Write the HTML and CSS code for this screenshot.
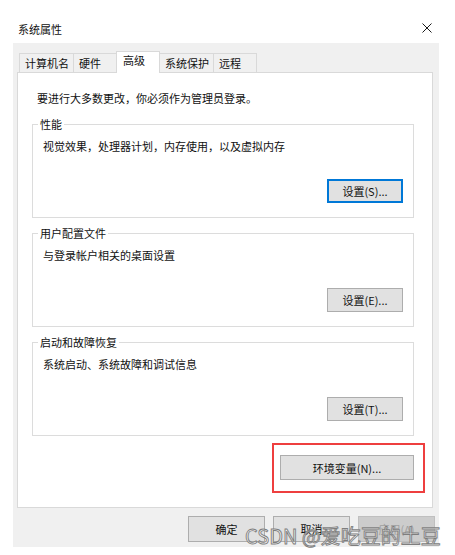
FILE: index.html
```html
<!DOCTYPE html>
<html>

<head>
    <link rel="stylesheet" href="styles.css">
</head>

<body>
    <div class="titlebar">
        <span class="title">系统属性</span>
        <svg class="close" width="10" height="10" viewBox="0 0 10 10">
            <path d="M0.5 0.5 L9.5 9.5 M9.5 0.5 L0.5 9.5" stroke="#1a1a1a" stroke-width="1" fill="none" />
        </svg>
    </div>

    <div class="dialog">
        <div class="tabs">
            <div class="tab">计算机名</div>
            <div class="tab">硬件</div>
            <div class="tab selected">高级</div>
            <div class="tab">系统保护</div>
            <div class="tab">远程</div>
        </div>

        <div class="panel">
            <p class="note">要进行大多数更改，你必须作为管理员登录。</p>

            <fieldset class="group">
                <legend>性能</legend>
                <p class="desc">视觉效果，处理器计划，内存使用，以及虚拟内存</p>
                <div class="group-actions">
                    <button class="btn default">设置(S)...</button>
                </div>
            </fieldset>

            <fieldset class="group">
                <legend>用户配置文件</legend>
                <p class="desc">与登录帐户相关的桌面设置</p>
                <div class="group-actions">
                    <button class="btn">设置(E)...</button>
                </div>
            </fieldset>

            <fieldset class="group">
                <legend>启动和故障恢复</legend>
                <p class="desc">系统启动、系统故障和调试信息</p>
                <div class="group-actions">
                    <button class="btn">设置(T)...</button>
                </div>
            </fieldset>

            <div class="env-row">
                <div class="highlight">
                    <button class="btn env">环境变量(N)...</button>
                </div>
            </div>
        </div>

        <div class="actions">
            <button class="btn wide">确定</button>
            <button class="btn wide">取消</button>
            <button class="btn wide" disabled>应用(A)</button>
        </div>
    </div>

    <div class="watermark">CSDN @爱吃豆的土豆</div>
</body>

</html>
```

FILE: styles.css
```css
body {
    margin: 0;
    background-color: white;
    font-family: "Noto Sans CJK SC", "Liberation Sans", sans-serif;
    font-size: 11px;
    line-height: 16px;
    color: #111;
    position: relative;
    height: 555px;
    overflow: hidden;
}

.titlebar {
    display: flex;
    align-items: flex-end;
    justify-content: space-between;
    height: 43px;
    box-sizing: border-box;
    padding: 0 23px 6px 18px;
}

.close {
    margin-bottom: 4px;
}

.dialog {
    margin-left: 13px;
    width: 426px;
    height: 504px;
    box-sizing: border-box;
    padding: 8px 6px 0 4px;
    background-color: #f0f0f0;
}

.tabs {
    display: flex;
    align-items: flex-end;
    height: 21px;
    padding-left: 2px;
    position: relative;
    z-index: 1;
}

.tab {
    height: 19px;
    min-width: 44px;
    box-sizing: border-box;
    padding: 0 4px 0 5px;
    border: 1px solid #d9d9d9;
    border-bottom: none;
    background-color: #f0f0f0;
    line-height: 18px;
    white-space: nowrap;
}

.tab + .tab {
    margin-left: -1px;
}

.tab.selected {
    height: 22px;
    margin-bottom: -1px;
    padding: 0 5px 4px 6px;
    background-color: white;
    line-height: 17px;
    position: relative;
}

.panel {
    height: 436px;
    box-sizing: border-box;
    padding: 17px 18px 0 14px;
    border: 1px solid #d9d9d9;
    background-color: white;
}

.note {
    margin: 0 0 10px 5px;
}

.group {
    margin: 0 0 7px;
    padding: 6px 10px 14px;
    border: 1px solid #dcdcdc;
    min-width: 0;
}

.group legend {
    margin-left: -5px;
    padding: 0 2px;
    line-height: 16px;
}

.desc {
    margin: 0 0 25px;
}

.group-actions {
    display: flex;
    justify-content: flex-end;
}

.btn {
    font-family: inherit;
    font-size: 11px;
    color: #111;
    width: 76px;
    height: 24px;
    padding: 0;
    border: 1px solid #adadad;
    background-color: #e1e1e1;
    box-sizing: border-box;
}

.btn.default {
    border-color: #0078d7;
    box-shadow: inset 0 0 0 1px #0078d7;
}

.btn:disabled {
    background-color: #cccccc;
    border-color: #bfbfbf;
    color: #a0a0a0;
}

.env-row {
    display: flex;
    justify-content: flex-end;
    margin-right: -11px;
    margin-top: 2px;
}

.highlight {
    padding: 10px 9px 11px 6px;
    border: 2px solid #ee3f3f;
}

.btn.env {
    width: 134px;
    height: 25px;
}

.actions {
    display: flex;
    justify-content: flex-end;
    gap: 8px;
    margin: 8px -2px 0 0;
}

.btn.wide {
    width: 77px;
    height: 26px;
}

.watermark {
    position: absolute;
    left: 245px;
    top: 525px;
    font-size: 20px;
    line-height: 22px;
    white-space: nowrap;
    color: rgba(255, 255, 255, 0.7);
    -webkit-text-stroke: 0.9px #7e7e7e;
}
```
